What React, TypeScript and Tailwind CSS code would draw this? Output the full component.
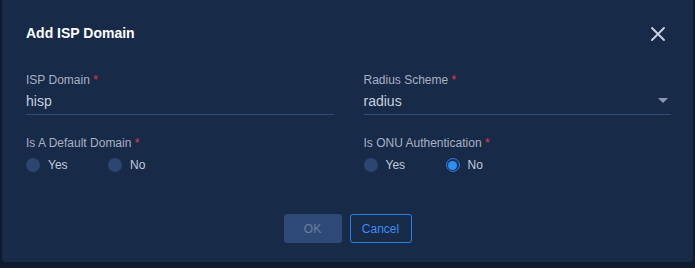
import React from "react";

const font = { fontFamily: '"Liberation Sans", Arial, sans-serif' };

function Label({ text }: { text: string }) {
  return (
    <div className="h-[16px] text-[12px] leading-[16px] text-[#a7b1c4]">
      {text} <span className="text-[#e5394a]">*</span>
    </div>
  );
}

function Radio({ label, checked }: { label: string; checked?: boolean }) {
  return (
    <div className="flex w-[82px] items-center gap-[8px]">
      {checked ? (
        <div className="flex h-[14px] w-[14px] items-center justify-center rounded-full border-[1.5px] border-[#2a7de0] bg-[#1b3356]">
          <div className="h-[9px] w-[9px] rounded-full bg-[#2f8df5]" />
        </div>
      ) : (
        <div className="h-[14px] w-[14px] rounded-full bg-[#2c4670]" />
      )}
      <span className="text-[12px] leading-[20px] text-[#c3cbdb]">{label}</span>
    </div>
  );
}

export default function App() {
  return (
    <div className="h-[268px] w-[695px] bg-[#0e1a2f] pl-[2px]" style={font}>
      <div className="flex h-[262px] w-[691px] flex-col rounded-b-[4px] bg-[#172a48] pl-[24px] pr-[22px] pt-[24px]">
        <div className="flex h-[18px] items-center justify-between">
          <div className="text-[14px] font-bold leading-[18px] text-white">Add ISP Domain</div>
          <svg width="14" height="14" viewBox="0 0 14 14" className="mr-[6px] mt-[1px]">
            <path d="M1 1 L13 13 M13 1 L1 13" stroke="#cdd4e2" strokeWidth="1.8" strokeLinecap="round" />
          </svg>
        </div>

        <div className="mt-[30px] grid grid-cols-2 gap-x-[30px]">
          <div>
            <Label text="ISP Domain" />
            <div className="flex h-[27px] items-center border-b border-[#2e4d7c] text-[14px] text-[#c7cfdf]">hisp</div>
          </div>
          <div>
            <Label text="Radius Scheme" />
            <div className="flex h-[27px] items-center justify-between border-b border-[#2e4d7c] text-[14px] text-[#c7cfdf]">
              <span>radius</span>
              <svg width="10" height="6" viewBox="0 0 10 6" className="mr-[3px]">
                <path d="M0 0 L10 0 L5 5 Z" fill="#8c99b1" />
              </svg>
            </div>
          </div>

          <div className="mt-[20px]">
            <Label text="Is A Default Domain" />
            <div className="mt-[4px] flex h-[20px] items-center">
              <Radio label="Yes" />
              <Radio label="No" />
            </div>
          </div>
          <div className="mt-[20px]">
            <Label text="Is ONU Authentication" />
            <div className="mt-[4px] flex h-[20px] items-center">
              <Radio label="Yes" />
              <Radio label="No" checked />
            </div>
          </div>
        </div>

        <div className="mt-[39px] flex justify-center gap-[8px] pr-[2px]">
          <button className="h-[29px] w-[58px] rounded-[3px] bg-[#2d4a76] text-[12px] text-[#6a7f9f]">OK</button>
          <button className="h-[29px] w-[62px] rounded-[3px] border border-[#2a7fe2] text-[12px] text-[#3b8ef2]">Cancel</button>
        </div>
      </div>
    </div>
  );
}
